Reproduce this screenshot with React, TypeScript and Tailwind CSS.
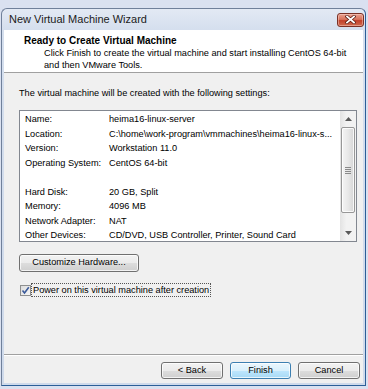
import React from "react";

const rows: [string, string][] = [
  ["Name:", "heima16-linux-server"],
  ["Location:", "C:\\home\\work-program\\vmmachines\\heima16-linux-s..."],
  ["Version:", "Workstation 11.0"],
  ["Operating System:", "CentOS 64-bit"],
  ["", ""],
  ["Hard Disk:", "20 GB, Split"],
  ["Memory:", "4096 MB"],
  ["Network Adapter:", "NAT"],
  ["Other Devices:", "CD/DVD, USB Controller, Printer, Sound Card"],
];

function Btn({
  children,
  primary,
  className,
}: {
  children: React.ReactNode;
  primary?: boolean;
  className?: string;
}) {
  return (
    <div
      className={
        "flex items-center justify-center rounded-[3px] border text-[9.2px] text-black shadow-[inset_0_0_0_1px_rgba(255,255,255,0.75)] " +
        (primary
          ? "border-[#3c7fb1] bg-[linear-gradient(to_bottom,#eaf6fd_0%,#d9f0fc_50%,#bee6fd_51%,#a7d9f5_100%)] "
          : "border-[#707070] bg-[linear-gradient(to_bottom,#f2f2f2_0%,#ebebeb_50%,#dddddd_51%,#cfcfcf_100%)] ") +
        (className ?? "")
      }
    >
      {children}
    </div>
  );
}

function CloseButton() {
  return (
    <div className="relative flex h-[14px] w-[27px] items-center justify-center rounded-[3px] border border-[#7a3126] bg-[linear-gradient(to_bottom,#e9a18f_0%,#d8735c_45%,#c2402a_55%,#cf6b4f_100%)] shadow-[inset_0_0_0_1px_rgba(255,220,210,0.45)]">
      <svg width="11" height="9" viewBox="0 0 11 9">
        <path d="M2 1.5 L9 7.5 M9 1.5 L2 7.5" stroke="#5a1c12" strokeWidth="3.2" strokeLinecap="square" />
        <path d="M2 1.5 L9 7.5 M9 1.5 L2 7.5" stroke="#ffffff" strokeWidth="1.8" strokeLinecap="square" />
      </svg>
    </div>
  );
}

function Scrollbar() {
  return (
    <div className="flex h-full w-[16px] shrink-0 flex-col bg-[linear-gradient(to_right,#e3e3e3,#f2f2f2_40%,#f2f2f2)]">
      <div className="flex h-[16px] shrink-0 items-center justify-center">
        <svg width="7" height="4" viewBox="0 0 7 4">
          <path d="M3.5 0 L7 4 L0 4 Z" fill="#5a5a5a" />
        </svg>
      </div>
      <div className="mx-[1px] flex h-[86px] shrink-0 items-center justify-center rounded-[2px] border border-[#979797] bg-[linear-gradient(to_right,#f4f4f4,#e8e8e8_50%,#d6d6d6)] shadow-[inset_0_0_0_1px_rgba(255,255,255,0.8)]">
        <div className="flex flex-col gap-[1px]">
          <div className="h-[1px] w-[6px] bg-[#8a8a8a]" />
          <div className="h-[1px] w-[6px] bg-[#8a8a8a]" />
          <div className="h-[1px] w-[6px] bg-[#8a8a8a]" />
          <div className="h-[1px] w-[6px] bg-[#8a8a8a]" />
        </div>
      </div>
      <div className="flex-1" />
      <div className="flex h-[16px] shrink-0 items-center justify-center">
        <svg width="7" height="4" viewBox="0 0 7 4">
          <path d="M0 0 L7 0 L3.5 4 Z" fill="#5a5a5a" />
        </svg>
      </div>
    </div>
  );
}

export default function App() {
  return (
    <div className="h-[389px] w-[368px] overflow-hidden bg-[#dae1f0] pl-[1px] pt-[8px] font-['Liberation_Sans',Arial,sans-serif] text-black">
      <div className="flex h-[378px] w-[365px] flex-col rounded-t-[6px] border border-[#70809a] border-b-[#2c5f98] border-r-[#2c5f98] bg-[linear-gradient(to_bottom,#e3e9f4_0%,#d5dfee_20px,#cfdaeb_100%)]">
        {/* Title bar */}
        <div className="flex h-[21px] shrink-0 items-center justify-between pl-[7px] pr-[1px]">
          <span className="text-[11px] text-[#1b1b1b]">New Virtual Machine Wizard</span>
          <CloseButton />
        </div>

        {/* Client area */}
        <div className="mx-[2px] mb-[2px] flex flex-1 flex-col bg-[#f0f0f0]">
          {/* Header */}
          <div className="h-[43px] shrink-0 border-b border-[#a0a0a0] bg-white pl-[20px] pt-[5px]">
            <div className="text-[10px] font-bold leading-[12px]">Ready to Create Virtual Machine</div>
            <div className="pl-[20px] text-[9.2px] leading-[12px]">
              Click Finish to create the virtual machine and start installing CentOS 64-bit
              <br />
              and then VMware Tools.
            </div>
          </div>

          {/* Body */}
          <div className="flex flex-1 flex-col pl-[15px] pt-[14px]">
            <div className="text-[9.2px] leading-[12px]">
              The virtual machine will be created with the following settings:
            </div>

            <div className="mt-[11px] flex h-[132px] w-[338px] overflow-hidden border border-[#828790] bg-white">
              <div className="flex-1 overflow-hidden pl-[5px] pt-[2px]">
                {rows.map(([k, v], i) => (
                  <div key={i} className="flex h-[14.5px] items-center whitespace-nowrap text-[9.2px]">
                    <span className="w-[84px] shrink-0">{k}</span>
                    <span>{v}</span>
                  </div>
                ))}
              </div>
              <Scrollbar />
            </div>

            <Btn className="mt-[12px] h-[18px] w-[120px]">Customize Hardware...</Btn>

            <div className="mt-[11px] flex items-center">
              <div className="ml-[1px] flex h-[11px] w-[11px] items-center justify-center border border-[#8e8f8f] bg-[linear-gradient(135deg,#dcdcdc,#f6f6f6)]">
                <svg width="9" height="9" viewBox="0 0 9 9">
                  <path d="M1.5 4.5 L3.5 7 L7.8 1.2" fill="none" stroke="#3a5a9a" strokeWidth="1.6" />
                </svg>
              </div>
              <div className="ml-[0px] border border-dotted border-[#555] px-[1px] text-[9.2px] leading-[12px]">
                Power on this virtual machine after creation
              </div>
            </div>
          </div>

          {/* Footer */}
          <div className="flex h-[29px] shrink-0 items-start justify-end gap-[7px] border-t border-[#a0a0a0] pr-[3px] pt-[7px] shadow-[inset_0_1px_0_#ffffff]">
            <Btn className="h-[17px] w-[62px]">&lt; Back</Btn>
            <Btn primary className="h-[17px] w-[61px]">Finish</Btn>
            <Btn className="h-[17px] w-[62px]">Cancel</Btn>
          </div>
        </div>
      </div>
    </div>
  );
}
